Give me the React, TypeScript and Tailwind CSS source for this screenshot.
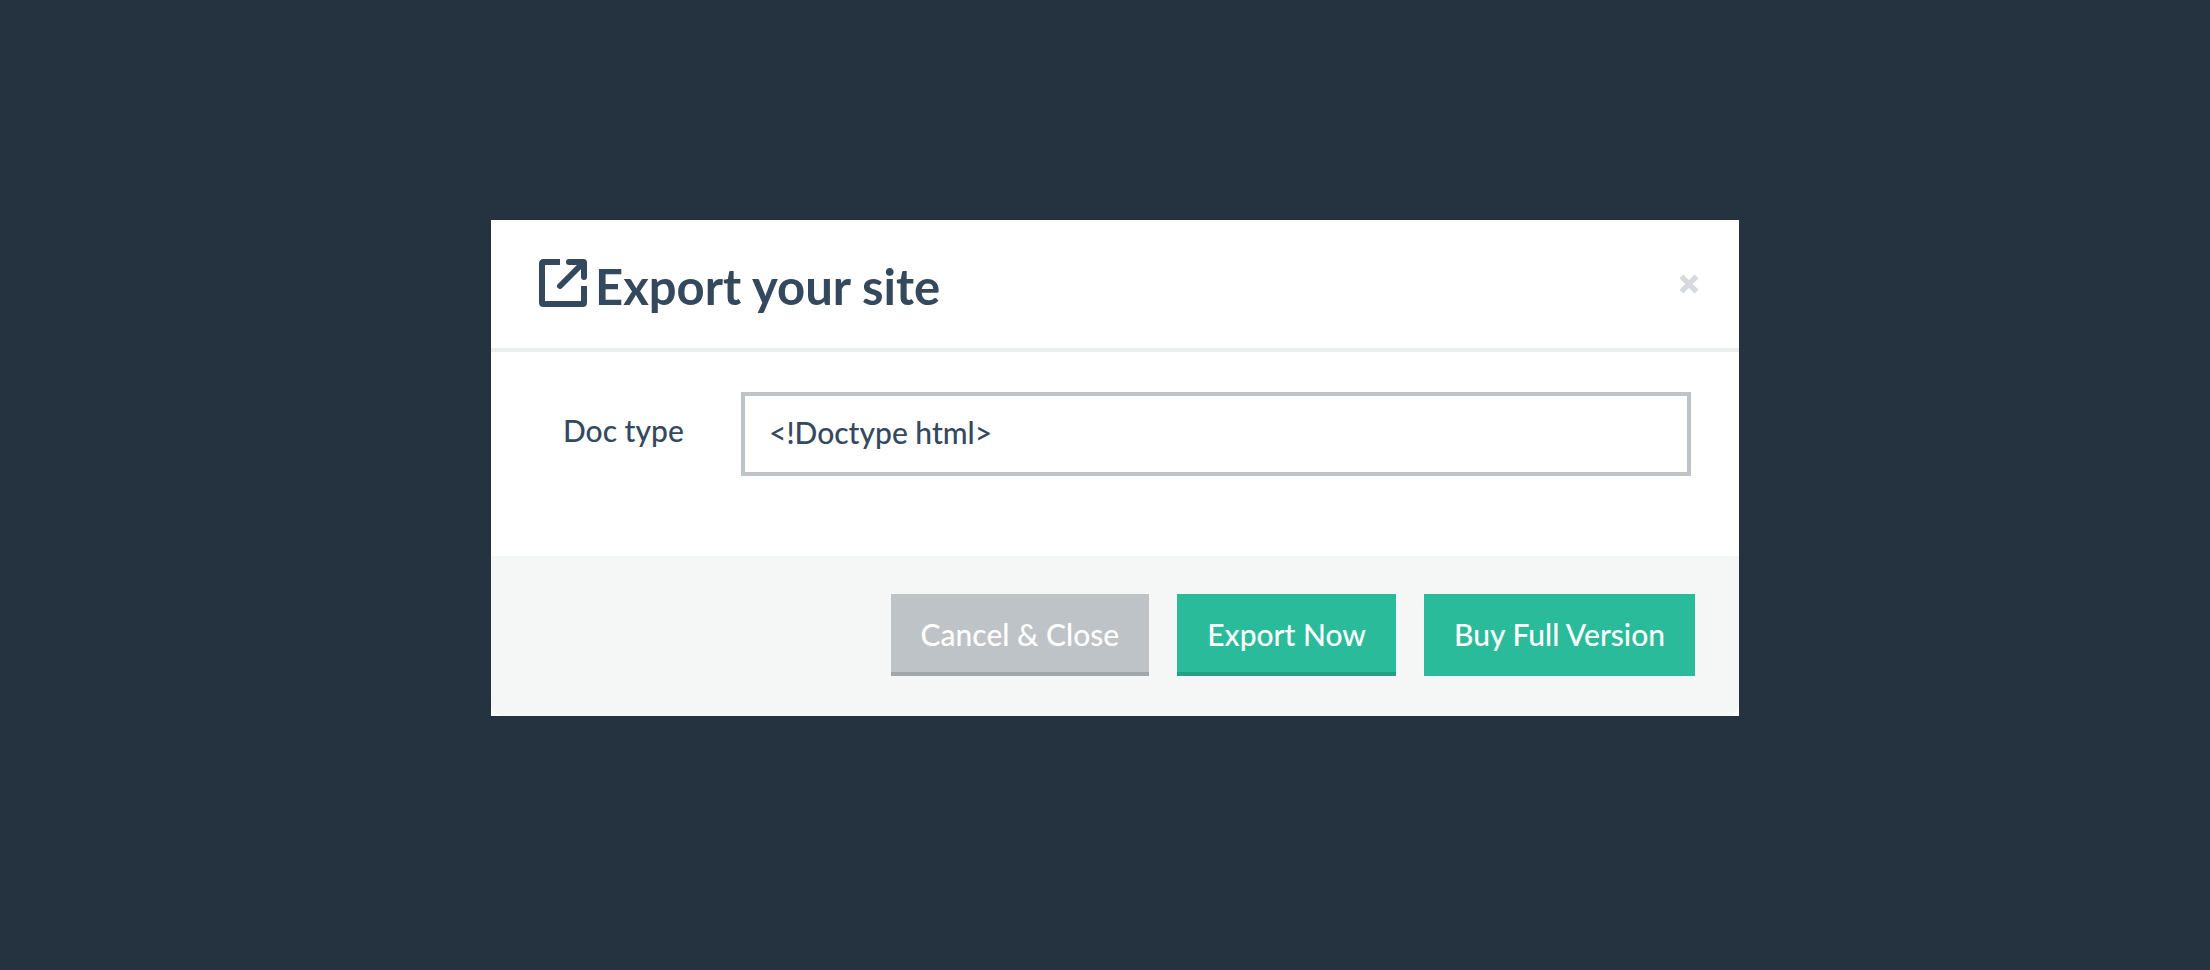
import { useState } from 'react';

function ExportIcon() {
  return (
    <svg viewBox="0 0 48 48" className="size-12 shrink-0" fill="none" stroke="currentColor" strokeWidth="6" aria-hidden="true">
      <path d="M21 3H4.5Q3 3 3 4.5V43.5Q3 45 4.5 45H43.5Q45 45 45 43.5V27" />
      <path d="M30 3H44.5Q45 3 45 3.5V18" strokeLinecap="round" />
      <path d="M21 27L43 5" strokeLinecap="round" />
      <path d="M35 3H45V13Z" fill="currentColor" stroke="none" />
    </svg>
  );
}

export default function App() {
  const [docType, setDocType] = useState('<!Doctype html>');

  return (
    <main className="flex min-h-screen items-start justify-center bg-[#253340] pt-[220px] pl-5 font-['Lato',sans-serif] text-[30px] leading-9 font-medium text-[#34495e]">
      <form
        role="dialog"
        aria-labelledby="dialog-title"
        className="w-full max-w-[1248px] bg-white"
        onSubmit={(event) => event.preventDefault()}
      >
        <header className="flex items-center border-b-4 border-[#ebedef] pt-[31px] pr-10 pb-[35px] pl-12">
          <h1 id="dialog-title" className="flex flex-1 items-start gap-2 pt-2 text-[49px] leading-[54px] font-bold">
            <ExportIcon />
            Export your site
          </h1>
          <button type="button" aria-label="Close" className="pt-1 text-[#d6dadf]">
            <svg viewBox="0 0 20 20" className="size-5" stroke="currentColor" strokeWidth="5.5" aria-hidden="true">
              <path d="M2.4 2.4L17.6 17.6M17.6 2.4L2.4 17.6" />
            </svg>
          </button>
        </header>

        <div className="flex items-start px-12 pt-10 pb-20">
          <label htmlFor="doc-type" className="w-[202px] shrink-0 pt-5 pl-6">
            Doc type
          </label>
          <input
            id="doc-type"
            type="text"
            value={docType}
            onChange={(event) => setDocType(event.target.value)}
            className="h-[84px] min-w-0 flex-1 border-4 border-[#bdc3c7] bg-white px-6 pb-1 outline-none"
          />
        </div>

        <footer className="flex justify-end gap-7 rounded-b-xl bg-[#f5f7f6] pt-[38px] pr-11 pb-10 text-white">
          <button type="button" className="border-b-4 border-[#a1a6a9] bg-[#bdc3c7] px-[30px] pt-[22px] pb-5">
            Cancel &amp; Close
          </button>
          <button type="submit" className="border-b-4 border-[#24a085] bg-[#2abb9b] px-[30px] pt-[22px] pb-5">
            Export Now
          </button>
          <button type="button" className="border-b-4 border-[#2abb9b] bg-[#2abb9b] px-[30px] pt-[22px] pb-5">
            Buy Full Version
          </button>
        </footer>
      </form>
    </main>
  );
}
